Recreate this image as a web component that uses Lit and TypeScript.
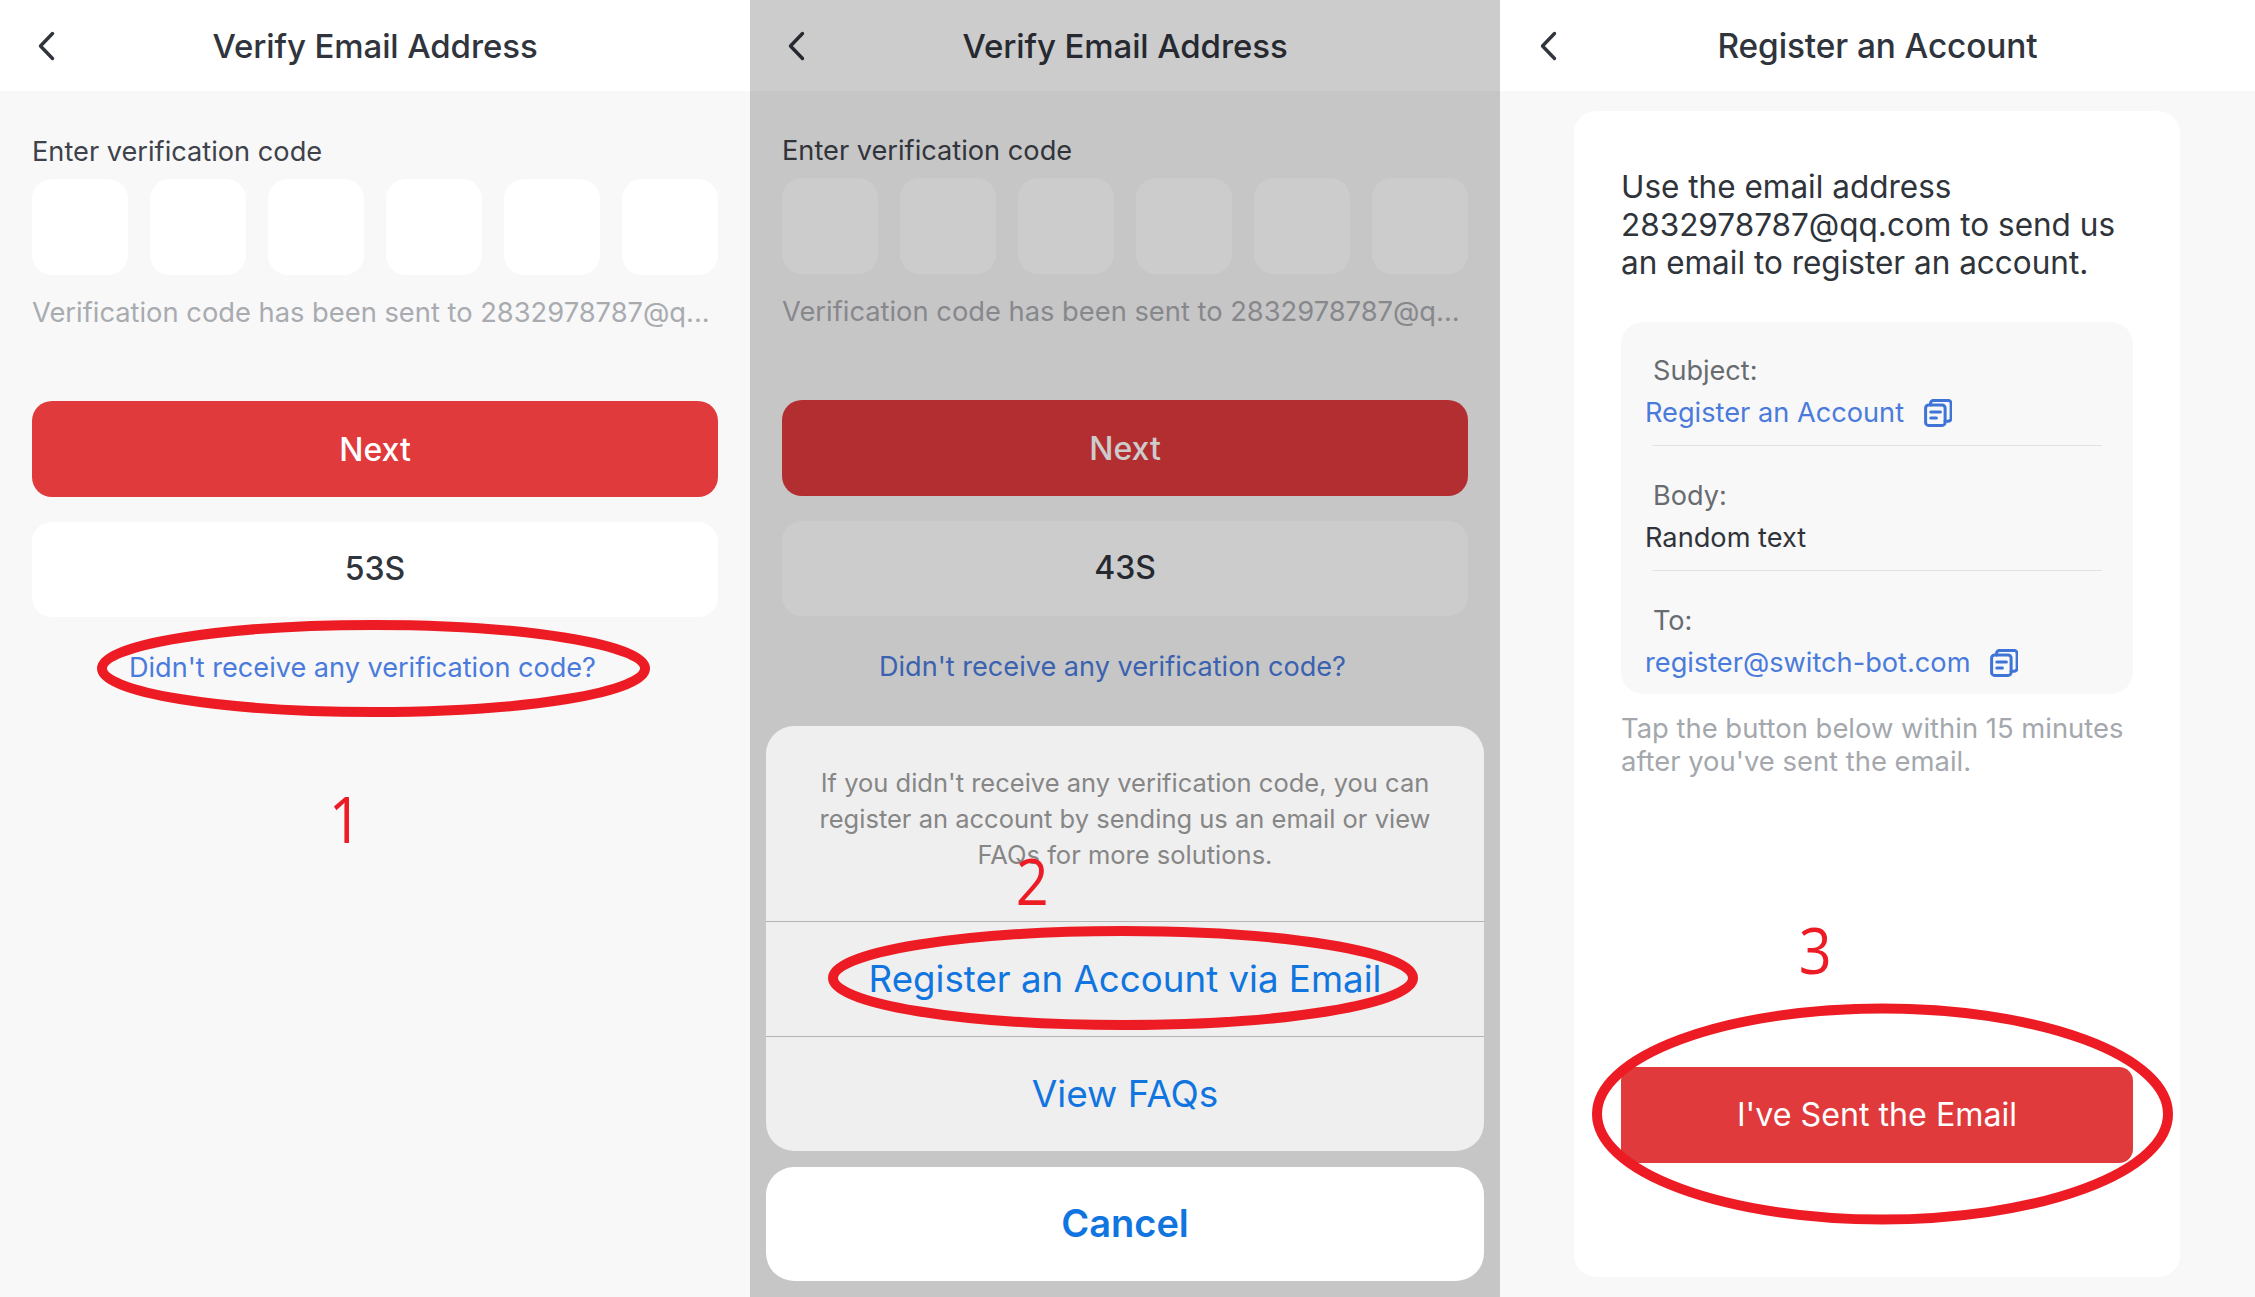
import { LitElement, html, css, svg } from "lit";
import { customElement, property } from "lit/decorators.js";

const chevron = html`<svg class="chev" viewBox="0 0 18 30" fill="none"><path d="M15.5 2.5 3.5 15l12 12.5" stroke="currentColor" stroke-width="3.4" stroke-linecap="round" stroke-linejoin="round"/></svg>`;
const copyIcon = html`<svg class="copy" viewBox="0 0 28 28" fill="none" stroke="#3f74d6" stroke-width="3" stroke-linecap="round" stroke-linejoin="round">
  <rect x="1.6" y="6" width="19.5" height="20.4" rx="3"/>
  <path d="M6.5 6V4.4a3 3 0 0 1 3-3h14.6a3 3 0 0 1 3 3v14.8a3 3 0 0 1-3 3H21"/>
  <path d="M6.8 13h9.6M6.8 19h5.6"/>
</svg>`;

@customElement("verify-screen")
class VerifyScreen extends LitElement {
  @property() seconds = "53S";
  @property({ type: Boolean }) dimmed = false;
  static styles = css`
    :host { display: block; position: relative; width: 750px; height: 1297px; background: #f8f8f8; color: #30343c; overflow: hidden; }
    .head { height: 91px; background: #fff; display: flex; align-items: center; justify-content: center; position: relative; font-size: 33px; font-weight: 500; letter-spacing: -.1px; }
    .chev { position: absolute; left: 37px; top: 31px; width: 18px; height: 30px; }
    .body { padding: 41px 32px 0 32px; }
    .dimmed .body { padding-top: 40px; }
    .label { font-size: 27.2px; line-height: 40px; color: #3e424a; }
    .codes { display: flex; gap: 22px; margin-top: 7px; }
    .code { flex: 1; height: 96px; background: #fff; border-radius: 20px; }
    .hint { margin-top: 18px; font-size: 27.3px; line-height: 40px; color: #a8abb0; white-space: nowrap; }
    .next { margin-top: 68px; height: 96px; border-radius: 20px; background: #e03a3c; color: #fff; display: flex; align-items: center; justify-content: center; font-size: 32px; font-weight: 500; }
    .timer { margin-top: 25px; height: 95px; box-sizing: border-box; padding-bottom: 2px; border-radius: 20px; background: #fff; display: flex; align-items: center; justify-content: center; font-size: 32px; font-weight: 500; }
    .link { margin-top: 30px; padding-right: 25px; text-align: center; font-size: 27.1px; line-height: 41px; color: #4a7bdc; }
  `;
  render() {
    return html`<div class=${this.dimmed ? "dimmed" : ""}>
      <div class="head">${chevron}<span>Verify Email Address</span></div>
      <div class="body">
        <div class="label">Enter verification code</div>
        <div class="codes">${[0, 1, 2, 3, 4, 5].map(() => html`<div class="code"></div>`)}</div>
        <div class="hint">Verification code has been sent to 2832978787@q...</div>
        <div class="next">Next</div>
        <div class="timer">${this.seconds}</div>
        <div class="link">Didn't receive any verification code?</div>
      </div>
    </div>`;
  }
}

@customElement("action-sheet")
class ActionSheet extends LitElement {
  static styles = css`
    :host { position: absolute; inset: 0; display: flex; flex-direction: column; justify-content: flex-end; gap: 16px; padding: 0 16px 16px 16px; background: rgba(0,0,0,.2); box-sizing: border-box; }
    .menu { background: #efefef; border-radius: 28px; overflow: hidden; color: #1175e0; font-size: 37px; }
    .msg { height: 195px; box-sizing: border-box; padding-top: 39px; text-align: center; font-size: 25.5px; line-height: 36px; color: #868686; }
    .item { height: 114px; box-sizing: content-box; border-top: 1px solid #b4b4b4; display: flex; align-items: center; justify-content: center; padding-bottom: 0; }
    .item span { position: relative; top: -1px; }
    .reg { font-size: 36.7px; }
    .cancel { height: 114px; box-sizing: border-box; padding-bottom: 3px; border-radius: 28px; background: #fff; color: #1175e0; font-size: 38px; font-weight: 600; display: flex; align-items: center; justify-content: center; }
  `;
  render() {
    return html`<div class="menu">
        <div class="msg">If you didn't receive any verification code, you can<br>register an account by sending us an email or view<br>FAQs for more solutions.</div>
        <div class="item reg"><span>Register an Account via Email</span></div>
        <div class="item"><span>View FAQs</span></div>
      </div>
      <div class="cancel">Cancel</div>`;
  }
}

@customElement("register-screen")
class RegisterScreen extends LitElement {
  static styles = css`
    :host { display: block; position: relative; width: 755px; height: 1297px; background: #f8f8f8; color: #30343c; overflow: hidden; }
    .head { height: 91px; background: #fff; display: flex; align-items: center; justify-content: center; position: relative; font-size: 33.4px; font-weight: 500; letter-spacing: -.1px; }
    .chev { position: absolute; left: 39px; top: 31px; width: 18px; height: 30px; }
    .card { margin: 20px 75px 0 74px; height: 1166px; box-sizing: border-box; background: #fff; border-radius: 22px; padding: 57px 47px 0 47px; }
    .lead { font-size: 31.5px; line-height: 38px; font-weight: 400; color: #2f333a; white-space: nowrap; }
    .box { margin-top: 40px; height: 372px; box-sizing: border-box; background: #f8f8f8; border-radius: 22px; padding: 29px 31px 0 24px; }
    .name { padding-left: 8px; font-size: 27.1px; line-height: 40px; color: #686b70; }
    .val { margin-top: 2px; display: flex; align-items: center; gap: 20px; font-size: 27.2px; line-height: 40px; color: #30343a; }
    .val.blue { color: #4a7bdc; }
    .rule { height: 1px; margin: 12px 0 30px 7px; background: #e3e3e3; }
    .copy { width: 28px; height: 28px; }
    .note { margin-top: 18px; font-size: 27.4px; line-height: 33px; color: #a4a8ad; white-space: nowrap; }
    .send { margin-top: 289px; height: 96px; border-radius: 14px; background: #e03a3c; color: #fff; display: flex; align-items: center; justify-content: center; font-size: 32.2px; padding-bottom: 1px; box-sizing: border-box; }
  `;
  render() {
    return html`<div class="head">${chevron}<span>Register an Account</span></div>
      <div class="card">
        <div class="lead">Use the email address<br>2832978787@qq.com to send us<br>an email to register an account.</div>
        <div class="box">
          <div class="name">Subject:</div>
          <div class="val blue">Register an Account ${copyIcon}</div>
          <div class="rule"></div>
          <div class="name">Body:</div>
          <div class="val">Random text</div>
          <div class="rule"></div>
          <div class="name">To:</div>
          <div class="val blue">register@switch-bot.com ${copyIcon}</div>
        </div>
        <div class="note">Tap the button below within 15 minutes<br>after you've sent the email.</div>
        <div class="send">I've Sent the Email</div>
      </div>`;
  }
}

@customElement("app-root")
class AppRoot extends LitElement {
  static styles = css`
    :host { display: block; position: relative; width: 2255px; height: 1297px; overflow: hidden; font-family: Inter, "Liberation Sans", sans-serif; }
    .row { display: flex; }
    .second { position: relative; }
    .marks { position: absolute; left: 0; top: 0; width: 2255px; height: 1297px; pointer-events: none; }
    .num { position: absolute; font-family: "Open Sans", sans-serif; font-size: 64px; line-height: 64px; color: #ed1c24; transform: scaleX(.9); }
    .n1 { left: 327px; top: 787px; }
    .n2 { left: 1014px; top: 849px; }
    .n3 { left: 1797px; top: 918px; }
  `;
  render() {
    return html`<div class="row">
        <verify-screen seconds="53S"></verify-screen>
        <div class="second"><verify-screen seconds="43S" dimmed></verify-screen><action-sheet></action-sheet></div>
        <register-screen></register-screen>
      </div>
      <svg class="marks" viewBox="0 0 2255 1297" fill="none" stroke="#ed1c24" stroke-width="10">
        ${svg`<ellipse cx="373.5" cy="668.5" rx="271.5" ry="43.5"/>
        <ellipse cx="1123" cy="978" rx="290" ry="47"/>
        <ellipse cx="1882.5" cy="1114" rx="285.5" ry="105.5"/>`}
      </svg>
      <div class="num n1">1</div><div class="num n2">2</div><div class="num n3">3</div>`;
  }
}
